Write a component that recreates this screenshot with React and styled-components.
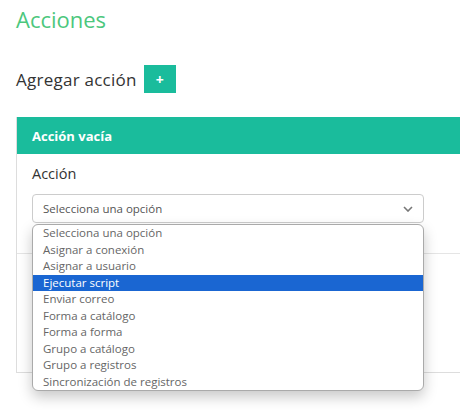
import styled, { createGlobalStyle } from "styled-components";

const options = [
  "Selecciona una opción",
  "Asignar a conexión",
  "Asignar a usuario",
  "Ejecutar script",
  "Enviar correo",
  "Forma a catálogo",
  "Forma a forma",
  "Grupo a catálogo",
  "Grupo a registros",
  "Sincronización de registros",
];

const GlobalStyle = createGlobalStyle`
  html, body {
    margin: 0;
    background: #fff;
    overflow: hidden;
  }
  body {
    font-family: "Open Sans", "Lato", sans-serif;
    color: #333;
  }
`;

export default function App() {
  return (
    <>
      <GlobalStyle />
      <Page>
        <Title>Acciones</Title>
        <AddRow>
          <AddLabel>Agregar acción</AddLabel>
          <AddButton>+</AddButton>
        </AddRow>
        <Card>
          <CardHeader>Acción vacía</CardHeader>
          <CardBody>
            <Label>Acción</Label>
            <SelectWrap>
              <SelectBox>
                <span>Selecciona una opción</span>
                <svg width="10" height="6" viewBox="0 0 10 6">
                  <path d="M1 1l4 4 4-4" fill="none" stroke="#777" strokeWidth="1.6" />
                </svg>
              </SelectBox>
              <Dropdown>
                {options.map((o) => (
                  <Option key={o} $active={o === "Ejecutar script"}>
                    {o}
                  </Option>
                ))}
              </Dropdown>
            </SelectWrap>
          </CardBody>
          <CardFooter />
        </Card>
      </Page>
    </>
  );
}

const Page = styled.div`
  padding: 0 0 0 16px;
  width: 444px;
  height: 410px;
  overflow: hidden;
`;

const Title = styled.h2`
  margin: 0;
  padding-top: 6px;
  font-size: 22px;
  line-height: 26px;
  font-weight: 400;
  color: #4cc77d;
`;

const AddRow = styled.div`
  display: flex;
  align-items: center;
  gap: 7px;
  margin-top: 33px;
`;

const AddLabel = styled.span`
  font-size: 17px;
  letter-spacing: 0.25px;
  color: #333;
`;

const AddButton = styled.div`
  width: 32px;
  height: 28px;
  background: #1abc9c;
  color: #fff;
  font-size: 14px;
  font-weight: 700;
  display: flex;
  align-items: center;
  justify-content: center;
`;

const Card = styled.div`
  margin-top: 24px;
  width: 480px;
  border: 1px solid #ddd;
  border-top: none;
`;

const CardHeader = styled.div`
  height: 37px;
  background: #1abc9c;
  color: #fff;
  font-size: 13px;
  font-weight: 700;
  padding: 0 15px;
  display: flex;
  align-items: center;
`;

const CardBody = styled.div`
  padding: 10px 15px 30px;
  border-bottom: 1px solid #e5e5e5;
`;

const Label = styled.div`
  font-size: 14.5px;
  line-height: 20px;
  margin-bottom: 10px;
  color: #333;
`;

const SelectWrap = styled.div`
  position: relative;
  width: 392px;
`;

const SelectBox = styled.div`
  height: 29px;
  box-sizing: border-box;
  border: 1px solid #ccc;
  border-radius: 4px;
  padding: 0 10px;
  display: flex;
  align-items: center;
  justify-content: space-between;
  font-size: 11.5px;
  color: #555;
`;

const Dropdown = styled.div`
  position: absolute;
  top: 30px;
  left: 0;
  right: 0;
  background: #fff;
  border: 1px solid #aaa;
  border-radius: 6px;
  box-shadow: 0 6px 14px rgba(0, 0, 0, 0.22);
  overflow: hidden;
  font-size: 11.5px;
`;

const Option = styled.div`
  height: 16.5px;
  line-height: 16.5px;
  padding-left: 10px;
  color: ${(p) => (p.$active ? "#fff" : "#666")};
  background: ${(p) => (p.$active ? "#1a66d2" : "transparent")};
  white-space: nowrap;
`;

const CardFooter = styled.div`
  height: 118px;
`;
